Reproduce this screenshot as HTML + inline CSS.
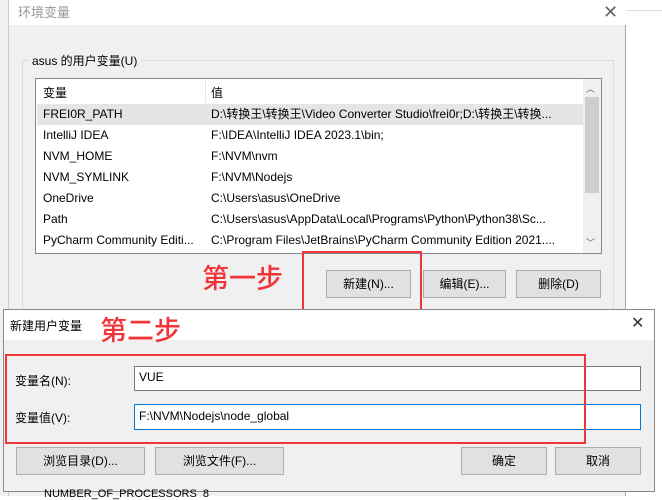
<!DOCTYPE html>
<html><head><meta charset="utf-8"><style>
*{box-sizing:border-box;margin:0;padding:0}
body{width:662px;height:496px;position:relative;overflow:hidden;background:#fff;font-family:"Liberation Sans","Noto Sans CJK SC",sans-serif;font-size:12px;color:#000}
.a{position:absolute}
.btn{position:absolute;background:#e1e1e1;border:1px solid #adadad;text-align:center;font-size:12px}
.row{position:absolute;left:37px;width:546px;height:21px;line-height:21px}
.row span{position:absolute}
.red{position:absolute;border:2px solid #f0343a}
.rt{position:absolute;color:#f0343a;font-size:27px;font-weight:500;font-family:"Noto Sans CJK SC",sans-serif;line-height:1}
</style></head><body>
<div class="a" style="left:0;top:0;width:9px;height:496px;background:#f0f0f0;border-right:1px solid #ccc"></div>
<div class="a" style="left:626px;top:10px;width:36px;height:1px;background:#ddd"></div>
<div class="a" style="left:9px;top:0;width:617px;height:496px;background:#f0f0f0;border-right:1px solid #aaa"></div>
<div class="a" style="left:9px;top:0;width:617px;height:25px;background:#fff"></div>
<div class="a" style="left:18px;top:2px;color:#999;font-size:13px">环境变量</div>
<div class="a" style="left:603px;top:2px;color:#666;font-size:18px">✕</div>
<div class="a" style="left:22px;top:60px;width:592px;height:300px;border:1px solid #dcdcdc"></div>
<div class="a" style="left:29px;top:52px;background:#f0f0f0;padding:0 3px;font-size:12px">asus 的用户变量(U)</div>
<div class="a" style="left:35px;top:78px;width:567px;height:176px;background:#fff;border:1px solid #828790"></div>
<div class="a" style="left:205px;top:80px;width:1px;height:23px;background:#e5e5e5"></div>
<div class="a" style="left:43px;top:84px">变量</div>
<div class="a" style="left:211px;top:84px">值</div>
<div class="a" style="left:583px;top:79px;width:18px;height:174px;background:#f0f0f0"></div>
<div class="a" style="left:585px;top:97px;width:14px;height:96px;background:#cdcdcd"></div>
<div class="a" style="left:586px;top:82px;font-size:9px;color:#606060">︿</div>
<div class="a" style="left:586px;top:236px;font-size:9px;color:#606060">﹀</div>
<div class="row" style="top:104px;background:#e5e5e5"><span style="left:6px">FREI0R_PATH</span><span style="left:174px">D:\转换王\转换王\Video Converter Studio\frei0r;D:\转换王\转换...</span></div>
<div class="row" style="top:125px"><span style="left:6px">IntelliJ IDEA</span><span style="left:174px">F:\IDEA\IntelliJ IDEA 2023.1\bin;</span></div>
<div class="row" style="top:146px"><span style="left:6px">NVM_HOME</span><span style="left:174px">F:\NVM\nvm</span></div>
<div class="row" style="top:167px"><span style="left:6px">NVM_SYMLINK</span><span style="left:174px">F:\NVM\Nodejs</span></div>
<div class="row" style="top:188px"><span style="left:6px">OneDrive</span><span style="left:174px">C:\Users\asus\OneDrive</span></div>
<div class="row" style="top:209px"><span style="left:6px">Path</span><span style="left:174px">C:\Users\asus\AppData\Local\Programs\Python\Python38\Sc...</span></div>
<div class="row" style="top:230px"><span style="left:6px">PyCharm Community Editi...</span><span style="left:174px">C:\Program Files\JetBrains\PyCharm Community Edition 2021....</span></div>
<div class="btn" style="left:326px;top:270px;width:85px;height:28px;line-height:26px">新建(N)...</div>
<div class="btn" style="left:423px;top:270px;width:83px;height:28px;line-height:26px">编辑(E)...</div>
<div class="btn" style="left:516px;top:270px;width:85px;height:28px;line-height:26px">删除(D)</div>
<div class="rt" style="left:202px;top:263px">第一步</div>
<div class="red" style="left:302px;top:251px;width:120px;height:62px"></div>
<div class="a" style="left:3px;top:309px;width:652px;height:183px;background:#f0f0f0;border:1px solid #888"></div>
<div class="a" style="left:4px;top:310px;width:650px;height:30px;background:#fff"></div>
<div class="a" style="left:10px;top:317px;font-size:12px">新建用户变量</div>
<div class="rt" style="left:100px;top:315px">第二步</div>
<div class="a" style="left:631px;top:313px;font-size:16px;color:#333">✕</div>
<div class="a" style="left:15px;top:372px">变量名(N):</div>
<div class="a" style="left:134px;top:366px;width:507px;height:25px;background:#fff;border:1px solid #7a7a7a;padding:3px 4px">VUE</div>
<div class="a" style="left:15px;top:409px">变量值(V):</div>
<div class="a" style="left:134px;top:404px;width:507px;height:26px;background:#fff;border:1px solid #0078d7;padding:4px 4px">F:\NVM\Nodejs\node_global</div>
<div class="red" style="left:5px;top:354px;width:581px;height:90px"></div>
<div class="btn" style="left:16px;top:447px;width:129px;height:28px;line-height:26px">浏览目录(D)...</div>
<div class="btn" style="left:155px;top:447px;width:129px;height:28px;line-height:26px">浏览文件(F)...</div>
<div class="btn" style="left:461px;top:447px;width:86px;height:28px;line-height:26px">确定</div>
<div class="btn" style="left:555px;top:447px;width:86px;height:28px;line-height:26px">取消</div>
<div class="a" style="left:44px;top:488px;font-size:11px">NUMBER_OF_PROCESSORS&nbsp;&nbsp;8</div>
</body></html>
